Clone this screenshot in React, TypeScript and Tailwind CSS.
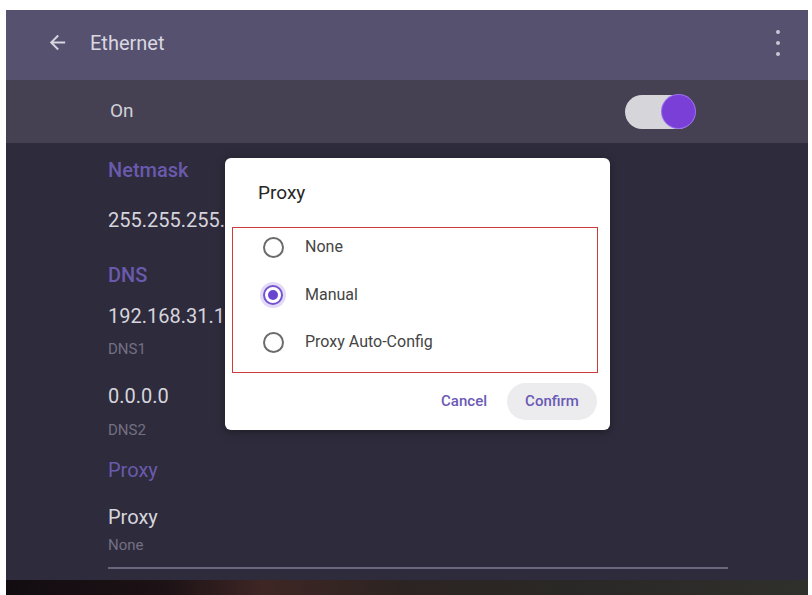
import React from "react";

function Radio({ checked }: { checked?: boolean }) {
  if (checked) {
    return (
      <div className="flex h-[26px] w-[26px] items-center justify-center rounded-full bg-[#e3daf7]">
        <div className="flex h-[20px] w-[20px] items-center justify-center rounded-full border-2 border-[#7454d0] bg-white">
          <div className="h-[10px] w-[10px] rounded-full bg-[#6a45cf]" />
        </div>
      </div>
    );
  }
  return (
    <div className="flex h-[26px] w-[26px] items-center justify-center">
      <div className="h-[21px] w-[21px] rounded-full border-2 border-[#6b6b6b] bg-white" />
    </div>
  );
}

export default function App() {
  const font = { fontFamily: "Roboto, 'Noto Sans', Arial, sans-serif" };
  return (
    <div className="relative h-[595px] w-[812px] overflow-hidden bg-white pl-[6px] pr-[4px] pt-[10px]" style={font}>
      <div className="flex h-[585px] flex-col bg-[#2e2b3c]">
        {/* Header */}
        <div className="flex h-[70px] items-center bg-[#55516e] pb-[5px] pl-[40px] pr-[28px]">
          <svg width="23" height="23" viewBox="0 0 24 24" className="text-[#d8d6e2]">
            <path d="M20 11H7.83l5.59-5.59L12 4l-8 8 8 8 1.41-1.41L7.83 13H20v-2z" fill="currentColor" />
          </svg>
          <span className="ml-[21px] text-[20px] leading-none text-[#d9d8e2]">Ethernet</span>
          <div className="ml-auto flex flex-col items-center gap-[7px]">
            <div className="h-[4px] w-[4px] rounded-full bg-[#c9c7d6]" />
            <div className="h-[4px] w-[4px] rounded-full bg-[#c9c7d6]" />
            <div className="h-[4px] w-[4px] rounded-full bg-[#c9c7d6]" />
          </div>
        </div>
        {/* On row */}
        <div className="flex h-[63px] items-center bg-[#454052] pl-[104px] pr-[113px]">
          <span className="text-[19px] text-[#d2d0da]">On</span>
          <div className="ml-auto flex h-[34px] w-[70px] items-center justify-end rounded-full bg-[#d6d5d9]">
            <div className="h-[33px] w-[33px] rounded-full bg-[#7a3fd6] shadow-[0_0_0_1px_#9b6ff0]" />
          </div>
        </div>
        {/* Body */}
        <div className="flex flex-1 flex-col pl-[102px] pr-[80px]">
          <div className="mt-[13px] text-[20px] font-medium leading-[28px] text-[#6a5aad]">Netmask</div>
          <div className="mt-[22px] text-[20px] leading-[28px] text-[#d6d5dd]">255.255.255.0</div>
          <div className="mt-[27px] text-[20px] font-medium leading-[28px] text-[#6a5aad]">DNS</div>
          <div className="mt-[13px] text-[20px] leading-[28px] text-[#d6d5dd]">192.168.31.1</div>
          <div className="mt-[9px] text-[15px] leading-[20px] text-[#737083]">DNS1</div>
          <div className="mt-[23px] text-[20px] leading-[28px] text-[#d6d5dd]">0.0.0.0</div>
          <div className="mt-[10px] text-[15px] leading-[20px] text-[#737083]">DNS2</div>
          <div className="mt-[16px] text-[20px] leading-[28px] text-[#6a5aad]">Proxy</div>
          <div className="mt-[19px] text-[20px] leading-[28px] text-[#d6d5dd]">Proxy</div>
          <div className="mt-[4px] text-[15px] leading-[20px] text-[#737083]">None</div>
          <div className="mt-[12px] h-[2px] bg-[#6a677d]" />
        </div>
        {/* Bottom strip */}
        <div className="h-[15px] bg-[linear-gradient(90deg,#120c10_0%,#1d1216_20%,#3e2624_32%,#2c2422_50%,#2a2826_70%,#2f2f2c_100%)]" />
      </div>

      {/* Dialog */}
      <div className="absolute left-[225px] top-[158px] flex h-[272px] w-[385px] flex-col rounded-[6px] bg-white shadow-[0_2px_10px_rgba(0,0,0,0.35)]">
        <div className="pl-[33px] pt-[22px] text-[19px] leading-[26px] text-[#262626]">Proxy</div>
        <div className="ml-[7px] mt-[21px] flex h-[146px] w-[366px] flex-col gap-[21.5px] border border-[#cf3a3a] pl-[27px] pt-[6px]">
          {[
            { label: "None", checked: false },
            { label: "Manual", checked: true },
            { label: "Proxy Auto-Config", checked: false },
          ].map((o) => (
            <div key={o.label} className="flex h-[26px] items-center">
              <Radio checked={o.checked} />
              <span className="ml-[19px] text-[16px] text-[#454545]">{o.label}</span>
            </div>
          ))}
        </div>
        <div className="mt-[10px] flex items-center justify-end pr-[13px]">
          <span className="mr-[20px] text-[15px] font-medium text-[#6a5ab4]">Cancel</span>
          <div className="flex h-[37px] w-[90px] items-center justify-center rounded-full bg-[#ececef] text-[15px] font-medium text-[#6a5ab4]">
            Confirm
          </div>
        </div>
      </div>
    </div>
  );
}
